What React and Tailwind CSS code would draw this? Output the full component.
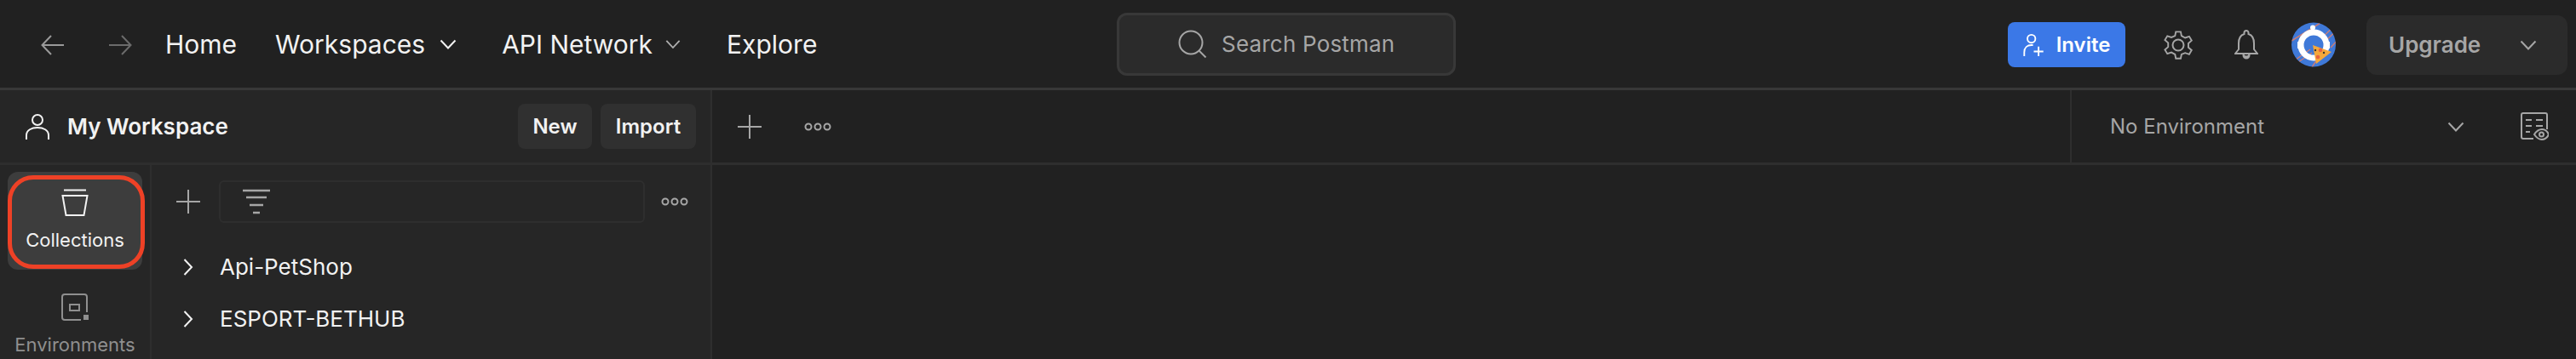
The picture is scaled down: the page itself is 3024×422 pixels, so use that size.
import React from "react";

const Ic = ({ w, h, vb, className = "", children, sw = 2 }) => (
  <svg width={w} height={h} viewBox={vb || `0 0 ${w} ${h}`} fill="none" stroke="currentColor" strokeWidth={sw} className={"shrink-0 " + className}>
    {children}
  </svg>
);

const Chevron = ({ className = "", w = 20 }) => (
  <Ic w={w} h={12} vb="0 0 20 12" className={className} sw={2}><path d="M1.5 1.5 10 10.5 18.500 1.500" /></Ic>
);

const Dots = ({ className = "" }) => (
  <Ic w={32} h={10} className={className} sw={2}>
    <circle cx="5" cy="5" r="3.500" /><circle cx="16" cy="5" r="3.500" /><circle cx="27" cy="5" r="3.500" />
  </Ic>
);

const Plus = ({ size = 28, className = "" }) => (
  <Ic w={size} h={size} className={className} sw={2}>
    <path d={`M${size / 2} 0V${size}M0 ${size / 2}H${size}`} />
  </Ic>
);

const Avatar = () => (
  <svg width="52" height="53" viewBox="0 0 52 53" className="shrink-0">
    <defs><clipPath id="av"><circle cx="26" cy="26.500" r="26" /></clipPath></defs>
    <circle cx="26" cy="26.500" r="26" fill="#3f79d8" />
    <g clipPath="url(#av)" stroke="#c77d78" strokeWidth="1.500">
      <path d="M0 22 34 1" /><path d="M36 18 50 5" /><path d="M41 21 54 9" /><path d="M46 30 56 19" />
      <path d="M5 44 22 32" /><path d="M8 47 24 36" /><path d="M24 53 34 38" />
    </g>
    <circle cx="25" cy="6.500" r="3" fill="#fff" />
    <circle cx="26" cy="27" r="15" fill="none" stroke="#fff" strokeWidth="7" />
    <rect x="7" y="23" width="4" height="8" fill="#fff" />
    <rect x="41" y="23" width="4" height="8" fill="#fff" />
    <path d="M25 27 47 35 29 49Z" fill="#f5a83b" />
    <circle cx="34" cy="33" r="2.300" fill="#e9633f" />
    <circle cx="31" cy="41" r="2.300" fill="#e9633f" />
    <circle cx="28" cy="33" r="1.200" fill="#333" />
    <circle cx="38" cy="36" r="1.200" fill="#333" />
  </svg>
);

export default function App() {
  return (
    <div className="w-[3024px] h-[422px] overflow-hidden bg-[#212121] text-white font-['Inter',sans-serif] flex flex-col">
      {/* Top bar */}
      <header className="h-[106px] shrink-0 border-b-[3px] border-[#383838] flex items-center relative">
        <div className="flex items-center pl-[48px] pt-[2px]">
          <Ic w={28} h={24} className="text-[#9a9a9a]"><path d="M27 12H2M12 1 1.500 12 12 23" /></Ic>
          <Ic w={28} h={24} className="ml-[51px] text-[#6b6b6b]"><path d="M1 12h25M16 1l10.500 11L16 23" /></Ic>
        </div>
        <nav className="flex items-center text-[30px] font-normal text-[#f2f2f2] pt-[1px]">
          <span className="ml-[39px]">Home</span>
          <span className="ml-[45px]">Workspaces</span>
          <Chevron className="ml-[17px]" />
          <span className="ml-[53px]">API Network</span>
          <Chevron className="ml-[15px] text-[#b0b0b0]" w={18} />
          <span className="ml-[54px]">Explore</span>
        </nav>
        <div className="absolute left-[1311px] top-[15px] w-[398px] h-[74px] rounded-[12px] bg-[#2b2b2b] border-[3px] border-[#383838] flex items-center pl-[69px] gap-[17px] text-[#a6a6a6]">
          <Ic w={34} h={34} sw={2}><circle cx="15" cy="15" r="13.500" /><path d="m24.500 24.500 8 8" /></Ic>
          <span className="text-[26px] leading-none tracking-[0.2px]">Search Postman</span>
        </div>
        <div className="ml-auto flex items-center pr-[10px] pt-[2px]">
          <button className="w-[138px] h-[53px] rounded-[8px] bg-[#3b78e7] flex items-center justify-center gap-[14px] text-[24px] font-semibold text-white">
            <Ic w={25} h={28} vb="0 0 26 30" sw={2}><circle cx="10" cy="7" r="5" /><path d="M1 29v-5c0-6 4-9 9-9h2M19 17v12M13 23h12" /></Ic>
            Invite
          </button>
          <Ic w={34} h={36} vb="0 0 34 36" className="ml-[45px] text-[#a6a6a6]" sw={2}>
            <circle cx="17" cy="18" r="6.500" />
            <path d="M14 1.500h6l1 5 4.500 2.500 5-1.700 3 5-4 3.500v5l4 3.500-3 5-5-1.700L21 29.500l-1 5h-6l-1-5L8.500 27l-5 1.700-3-5 4-3.500v-5l-4-3.500 3-5 5 1.700L13 6.500z" transform="scale(.95) translate(1 1)" />
          </Ic>
          <Ic w={28} h={36} className="ml-[49px] text-[#a6a6a6]" sw={2}>
            <path d="M14 1a2.500 2.500 0 0 1 2.500 2.500V5c5 1.500 6.500 6 6.500 11v7l4 5H1l4-5v-7C5 11 6.500 6.500 11.500 5V3.500A2.500 2.500 0 0 1 14 1Z" />
            <path d="M10.500 28a3.500 3.500 0 0 0 7 0v2a3.500 3.500 0 0 1-7 0Z" />
          </Ic>
          <div className="ml-[39px]"><Avatar /></div>
          <button className="ml-[36px] w-[236px] h-[70px] rounded-[12px] bg-[#2b2b2b] flex items-center pl-[26px] text-[26px] font-semibold text-[#a6a6a6]">
            Upgrade
            <Chevron className="ml-[46px]" />
          </button>
        </div>
      </header>

      {/* Second row */}
      <div className="h-[88px] shrink-0 border-b-[3px] border-[#2e2e2e] flex">
        <div className="w-[836px] shrink-0 bg-[#262626] border-r-[2px] border-[#2e2e2e] flex items-center pl-[30px] pr-[17px]">
          <Ic w={28} h={30} className="text-[#f2f2f2]"><circle cx="14" cy="7" r="6" /><path d="M1 30v-5c0-6 6-9 13-9s13 3 13 9v5" /></Ic>
          <span className="ml-[21px] text-[26px] font-semibold text-[#f2f2f2]">My Workspace</span>
          <button className="ml-auto w-[87px] h-[53px] rounded-[8px] bg-[#303030] text-[24px] font-semibold text-[#f2f2f2]">New</button>
          <button className="ml-[10px] w-[112px] h-[53px] rounded-[8px] bg-[#303030] text-[24px] font-semibold text-[#f2f2f2]">Import</button>
        </div>
        <div className="flex-1 flex items-center">
          <Plus className="ml-[30px] text-[#a6a6a6]" />
          <Dots className="ml-[50px] text-[#a6a6a6]" />
          <div className="ml-auto w-[594px] h-full border-l-[2px] border-[#2e2e2e] flex items-center pl-[45px] text-[#a6a6a6]">
            <span className="text-[24px] font-normal w-[396px]">No Environment</span>
            <Chevron />
            <Ic w={34} h={34} className="ml-[65px]" sw={2}>
              <path d="M16 31H4a2 2 0 0 1-2-2V3a2 2 0 0 1 2-2h26a2 2 0 0 1 2 2v17" />
              <path d="M7 9h7M19 9h8M7 16h7M19 16h8M7 23h5" />
              <path d="M17 26c3-4.500 6-6 9-6s6 1.500 8 6c-2 4.500-5 6-8 6s-6-1.500-9-6Z" fill="#212121" />
              <circle cx="25.500" cy="26" r="2.500" />
            </Ic>
          </div>
        </div>
      </div>

      {/* Body */}
      <div className="flex-1 min-h-0 flex">
        <aside className="w-[836px] shrink-0 bg-[#262626] border-r-[2px] border-[#2e2e2e] flex">
          <div className="w-[178px] shrink-0 border-r-[2px] border-[#2e2e2e] pl-[9px] pr-[9px] pt-[8px] flex flex-col">
            <div className="w-[158px] h-[115px] rounded-[12px] bg-[#3d3d3d] relative flex flex-col items-center pt-[20px] text-[#f2f2f2]">
              <div className="absolute left-0 right-[-3px] top-[4px] bottom-[1px] rounded-[30px] border-[5px] border-[#ee4126]" />
              <Ic w={32} h={32} sw={2}><path d="M3 1.500h26M1.500 8h29L26.500 31h-21z" /></Ic>
              <span className="mt-[12px] text-[22px] leading-[32px]">Collections</span>
            </div>
            <div className="mt-[28px] flex flex-col items-center text-[#8f8f8f]">
              <Ic w={32} h={32} sw={2}>
                <path d="M30 22V4a3 3 0 0 0-3-3H4a3 3 0 0 0-3 3v24a3 3 0 0 0 3 3h19" />
                <rect x="10" y="13" width="11" height="7" />
                <rect x="26" y="25" width="6" height="6" fill="currentColor" stroke="none" />
              </Ic>
              <span className="mt-[12px] text-[22px] leading-[32px] whitespace-nowrap">Environments</span>
            </div>
          </div>
          <div className="flex-1 min-w-0">
            <div className="h-[50px] mt-[18px] flex items-center pl-[29px]">
              <Plus size={28} className="text-[#a6a6a6]" />
              <div className="ml-[22px] w-[500px] h-[50px] rounded-[6px] border-[2px] border-[#2e2e2e] flex items-center pl-[25px] text-[#a6a6a6]">
                <Ic w={34} h={30} sw={2.500}><path d="M1 2h32M5 10h24M9 19h16M13 28h8" /></Ic>
              </div>
              <Dots className="ml-[19px] text-[#a6a6a6]" />
            </div>
            <div className="mt-[21px] flex flex-col text-[#f2f2f2]">
              {["Api-PetShop", "ESPORT-BETHUB"].map((t) => (
                <div key={t} className="h-[61px] flex items-center pl-[37px]">
                  <Ic w={12} h={20} sw={2}><path d="M1.500 1 10 10l-8.500 9" /></Ic>
                  <span className="ml-[31px] text-[26px]">{t}</span>
                </div>
              ))}
            </div>
          </div>
        </aside>
        <main className="flex-1" />
      </div>
    </div>
  );
}
